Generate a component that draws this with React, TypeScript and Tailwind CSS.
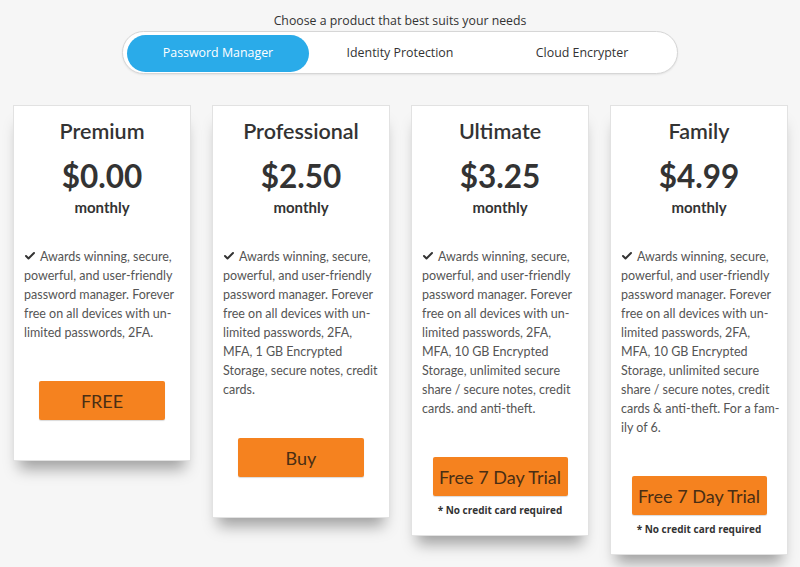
import { Check } from "lucide-react";

interface Plan {
  name: string;
  price: string;
  text: string;
  button: string;
  note?: boolean;
  wide?: boolean;
}

const plans: Plan[] = [
  {
    name: "Premium",
    price: "$0.00",
    text: "Awards winning, secure, powerful, and user-friendly password manager. Forever free on all devices with un-\u200Blimited passwords, 2FA.",
    button: "FREE",
  },
  {
    name: "Professional",
    price: "$2.50",
    text: "Awards winning, secure, powerful, and user-friendly password manager. Forever free on all devices with un-\u200Blimited passwords, 2FA, MFA, 1 GB Encrypted Storage, secure notes, credit cards.",
    button: "Buy",
  },
  {
    name: "Ultimate",
    price: "$3.25",
    text: "Awards winning, secure, powerful, and user-friendly password manager. Forever free on all devices with un-\u200Blimited passwords, 2FA, MFA, 10 GB Encrypted Storage, unlimited secure share / secure notes, credit cards. and anti-theft.",
    button: "Free 7 Day Trial",
    note: true,
    wide: true,
  },
  {
    name: "Family",
    price: "$4.99",
    text: "Awards winning, secure, powerful, and user-friendly password manager. Forever free on all devices with un-\u200Blimited passwords, 2FA, MFA, 10 GB Encrypted Storage, unlimited secure share / secure notes, credit cards & anti-theft. For a fam-\u200Bily of 6.",
    button: "Free 7 Day Trial",
    note: true,
    wide: true,
  },
];

const tabs = ["Password Manager", "Identity Protection", "Cloud Encrypter"];

function PlanCard({ plan }: { plan: Plan }) {
  return (
    <div
      className={`flex w-[178px] flex-col items-center border border-[#e2e2e2] bg-white px-[10px] pt-[6px] shadow-[0_14px_14px_-6px_rgba(0,0,0,0.35)] ${
        plan.note ? "pb-[19px]" : "pb-[40px]"
      }`}
    >
      <div className="text-[21.5px] font-semibold leading-[38px] text-[#333]">{plan.name}</div>
      <div className="mt-[6px] text-[31.5px] font-bold leading-[40px] text-[#333]">{plan.price}</div>
      <div className="mt-[1px] text-[15px] font-bold leading-[20px] text-[#333]">monthly</div>
      <p className="mr-[-5px] mt-[30px] self-stretch text-[12.5px] leading-[19px] text-[#555]">
        <Check size={12} strokeWidth={4} className="mr-[4px] inline-block align-[-1px] text-[#333]" />
        {plan.text}
      </p>
      <button
        className={`mt-[39px] h-[39px] rounded-[2px] bg-[#f5821f] text-[18px] leading-none text-[#4a2e14] shadow-[0_1px_1px_rgba(0,0,0,0.15)] ${
          plan.wide ? "w-[135px]" : "w-[126px]"
        }`}
      >
        {plan.button}
      </button>
      {plan.note && (
        <div className="mt-[8px] font-['Open_Sans',sans-serif] text-[10px] font-bold leading-[12px] text-[#333]">
          * No credit card required
        </div>
      )}
    </div>
  );
}

export default function App() {
  return (
    <div className="h-[567px] w-[800px] overflow-hidden bg-[#f6f6f6] font-['Lato',sans-serif]">
      <div className="pt-[12px] text-center font-['Open_Sans',sans-serif] text-[12.3px] leading-[18px] text-[#333]">
        Choose a product that best suits your needs
      </div>
      <div className="mx-auto mt-[1px] flex h-[43px] w-[556px] items-center rounded-full border border-[#d6d6d6] bg-white px-[4px] pt-[1px] font-['Open_Sans',sans-serif] text-[12.4px] text-[#333] shadow-[0_1px_2px_rgba(0,0,0,0.08)]">
        {tabs.map((t, i) => (
          <div
            key={t}
            className={`flex h-[37px] w-[185px] items-center justify-center rounded-full ${
              i === 0 ? "bg-[#2aabe9] text-white" : ""
            }`}
          >
            {t}
          </div>
        ))}
      </div>
      <div className="mt-[31px] flex items-start gap-[21px] pl-[13px]">
        {plans.map((p) => (
          <PlanCard key={p.name} plan={p} />
        ))}
      </div>
    </div>
  );
}
